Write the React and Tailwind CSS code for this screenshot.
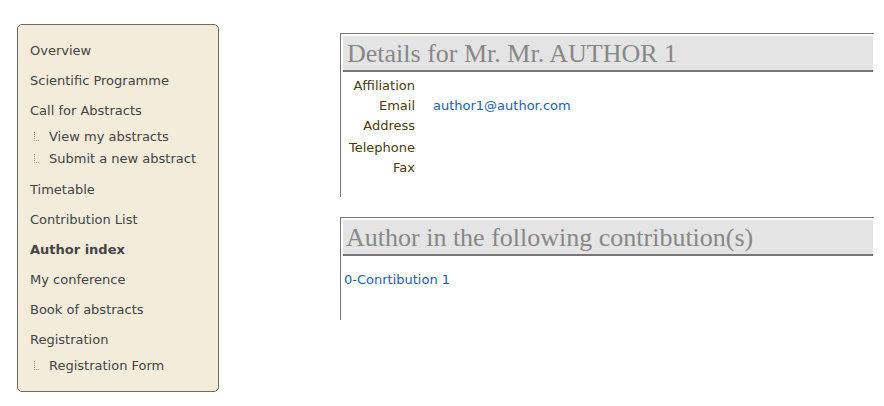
import React from "react";

const sans = { fontFamily: '"DejaVu Sans", Verdana, sans-serif' };
const serif = { fontFamily: '"Liberation Serif", "Times New Roman", serif' };

function Sub({ children }) {
  return (
    <div className="flex items-center h-[22px] pl-[2px]">
      <svg width="12" height="12" viewBox="0 0 12 12" className="mr-[5px]">
        <g fill="#999">
          <rect x="2" y="1" width="1" height="1" />
          <rect x="2" y="3" width="1" height="1" />
          <rect x="2" y="5" width="1" height="1" />
          <rect x="2" y="7" width="1" height="1" />
          <rect x="2" y="9" width="1" height="1" />
          <rect x="4" y="9" width="1" height="1" />
          <rect x="6" y="9" width="1" height="1" />
        </g>
      </svg>
      <span>{children}</span>
    </div>
  );
}

function Item({ children, bold }) {
  return (
    <div className={"h-[30px] flex items-center " + (bold ? "font-bold" : "")}>{children}</div>
  );
}

export default function App() {
  return (
    <div className="w-[884px] h-[406px] bg-white flex text-[13px] text-[#444]" style={sans}>
      <div className="pl-[17px] pt-[24px] w-[340px] shrink-0">
        <div className="w-[202px] h-[368px] border border-[#6e6a60] rounded-[5px] bg-[#f3ecdb] px-[12px] pt-[11px]">
          <Item>Overview</Item>
          <Item>Scientific Programme</Item>
          <Item>Call for Abstracts</Item>
          <Sub>View my abstracts</Sub>
          <Sub>Submit a new abstract</Sub>
          <div className="mt-[5px]">
            <Item>Timetable</Item>
            <Item>Contribution List</Item>
            <Item bold>Author index</Item>
            <Item>My conference</Item>
            <Item>Book of abstracts</Item>
            <Item>Registration</Item>
          </div>
          <Sub>Registration Form</Sub>
        </div>
      </div>
      <div className="flex flex-col pt-[33px] w-[534px]">
        <div className="border-t border-l border-[#777] h-[164px] pt-[2px] pl-[2px]">
          <div className="w-[530px] h-[36px] bg-[#e4e4e4] border-b-2 border-[#777] flex items-center pl-[4px] text-[26px] text-[#888]" style={serif}>
            Details for Mr. Mr. AUTHOR 1
          </div>
          <div className="grid grid-cols-[72px_1fr] gap-x-[18px] mt-[4px] text-[#4a3a0c]">
            <div className="text-right h-[20px] leading-[20px]">Affiliation</div><div></div>
            <div className="text-right h-[20px] leading-[20px]">Email</div><div className="h-[20px] leading-[20px] text-[#1d62a6]">author1@author.com</div>
            <div className="text-right h-[20px] leading-[20px]">Address</div><div></div>
            <div className="text-right h-[22px] leading-[22px] mt-[1px]">Telephone</div><div></div>
            <div className="text-right h-[20px] leading-[18px]">Fax</div><div></div>
          </div>
        </div>
        <div className="mt-[20px] border-t border-l border-[#777] h-[103px] pt-[2px] pl-[2px]">
          <div className="w-[530px] h-[36px] bg-[#e4e4e4] border-b-2 border-[#777] flex items-center pl-[3px] text-[26px] text-[#888]" style={serif}>
            Author in the following contribution(s)
          </div>
          <div className="mt-[14px] pl-[1px] text-[#1d62a6]">0-Conrtibution 1</div>
        </div>
      </div>
    </div>
  );
}
